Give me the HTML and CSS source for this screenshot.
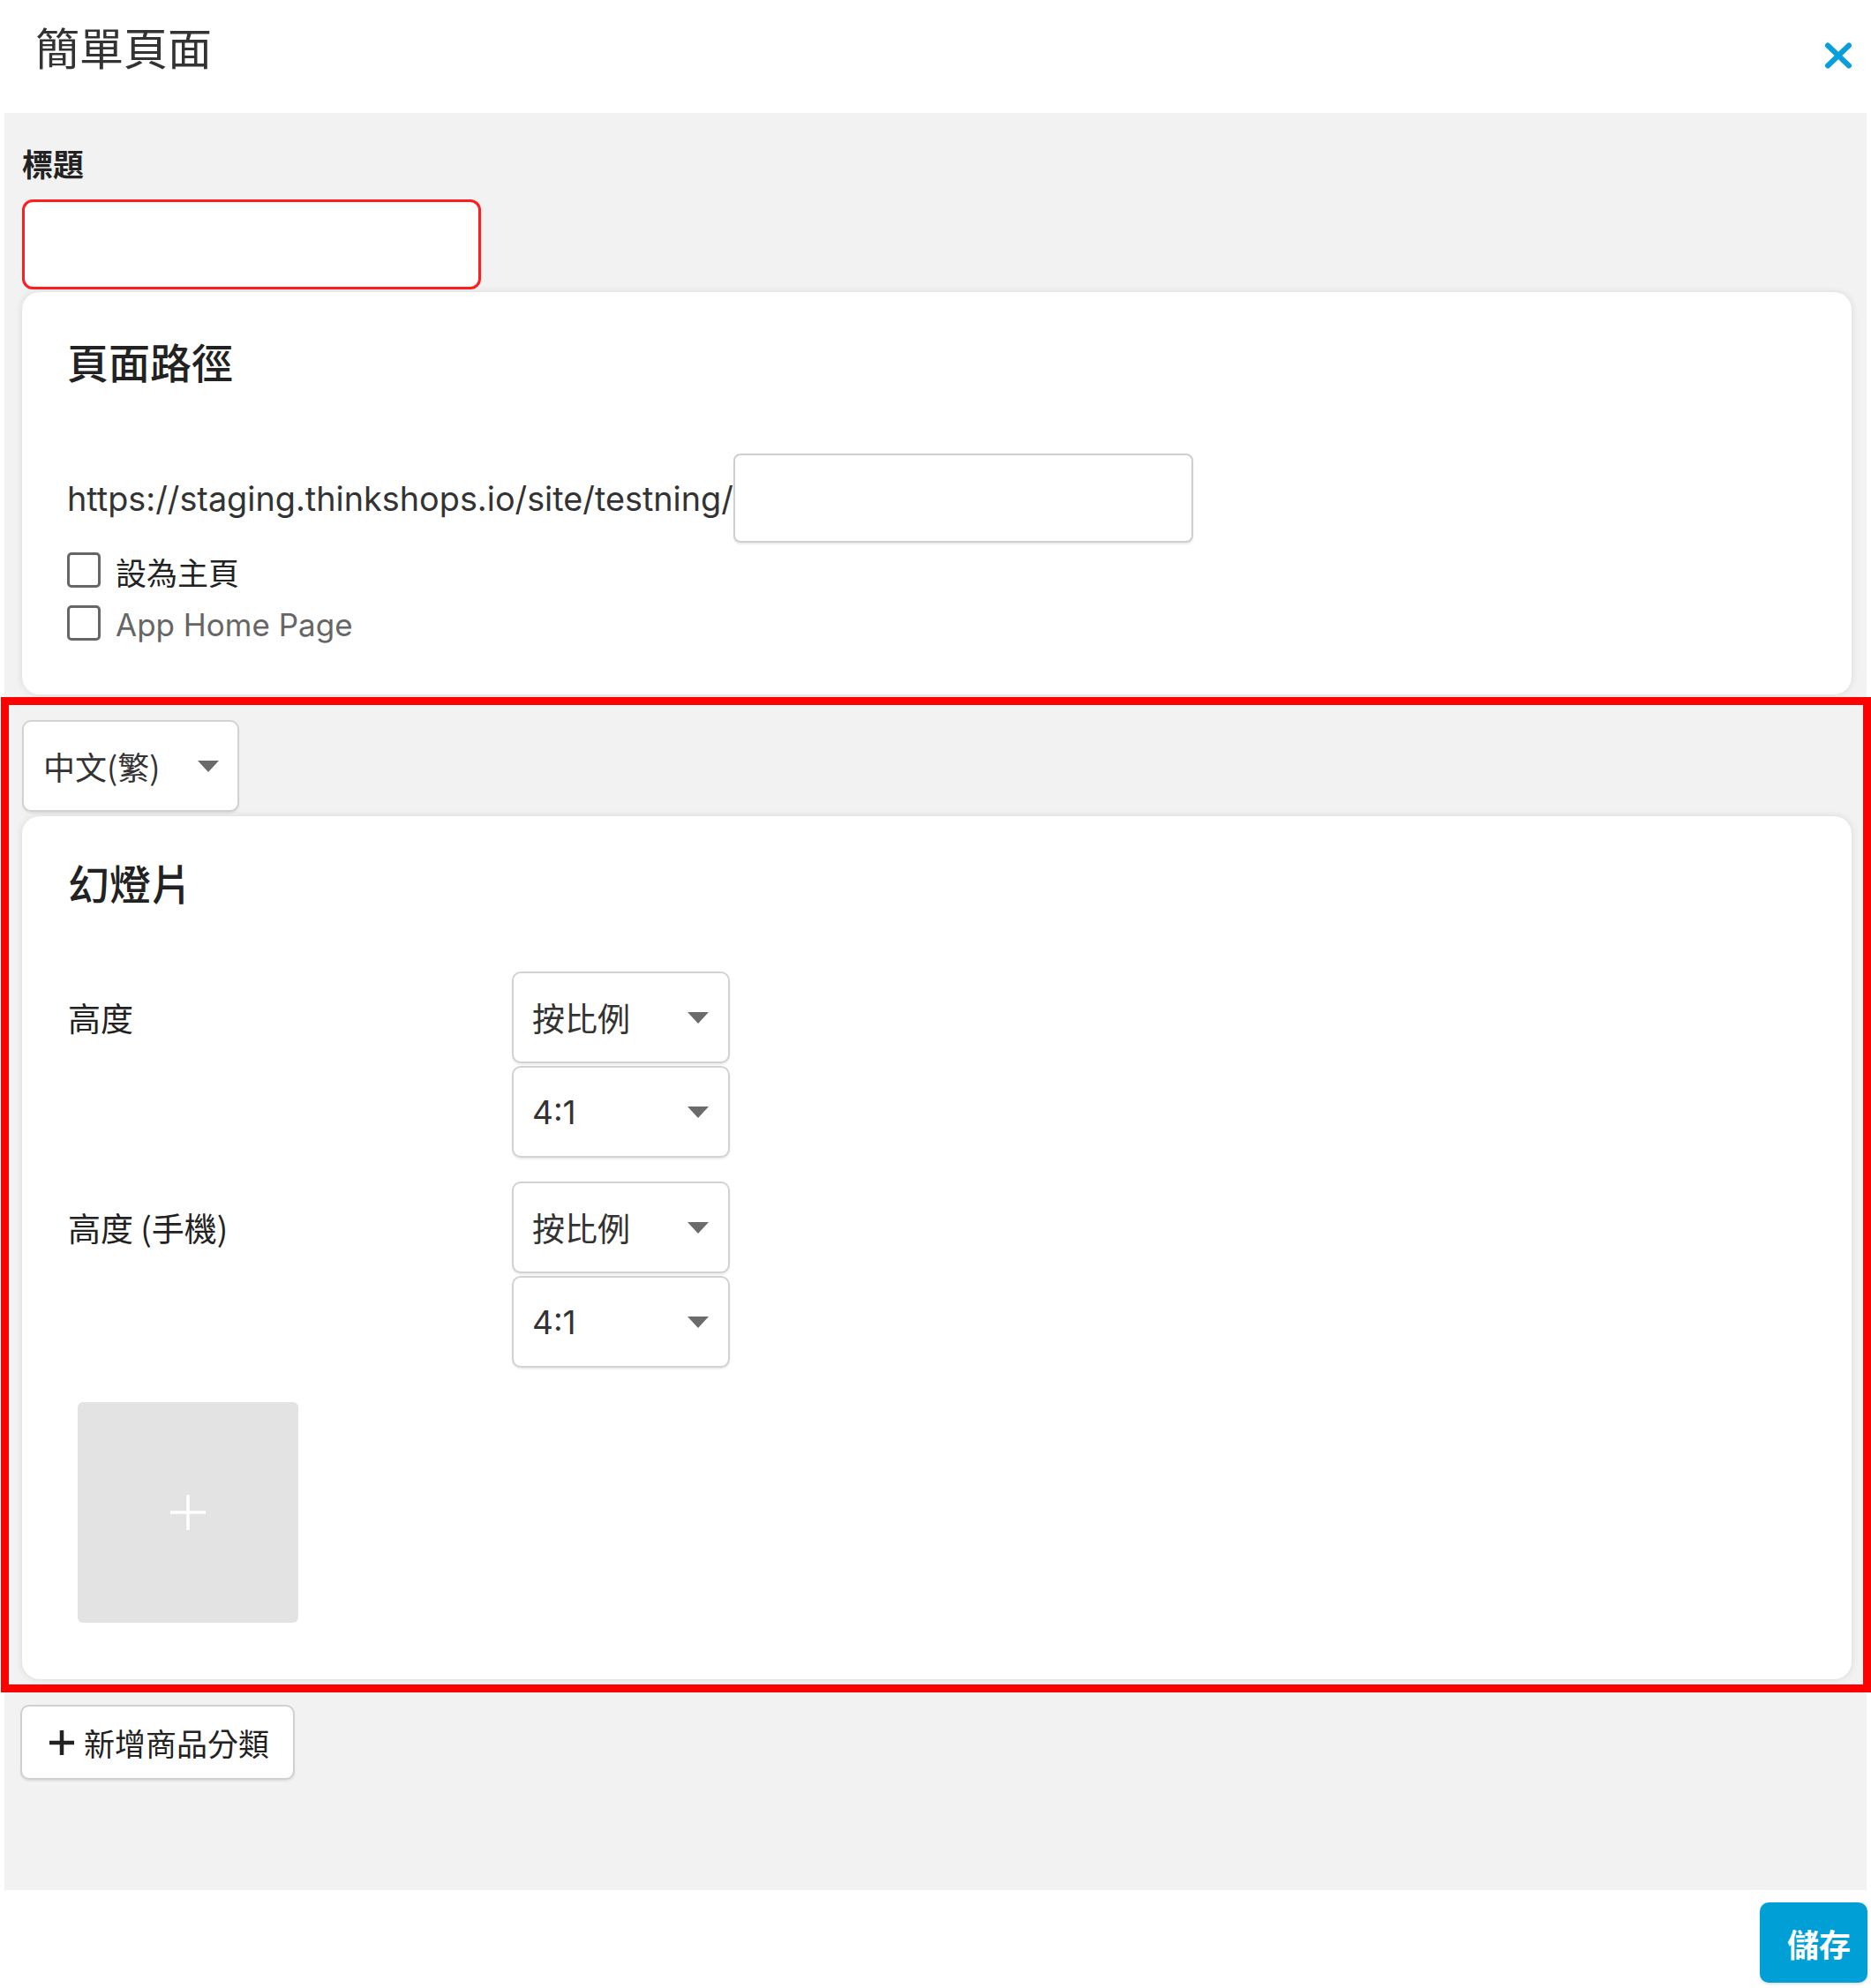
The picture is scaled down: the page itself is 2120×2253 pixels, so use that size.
FILE: index.html
```html
<!DOCTYPE html>
<html lang="zh-Hant">
<head>
<meta charset="utf-8">
<title>簡單頁面</title>
<link rel="stylesheet" href="styles.css">
</head>
<body>
<div class="page">
  <header class="header">
    <h1 class="title">簡單頁面</h1>
    <button class="close" aria-label="關閉">
      <svg width="34" height="32" viewBox="0 0 34 32"><path d="M5 4.5 L29 27.5 M29 4.5 L5 27.5" stroke="#0a9fd8" stroke-width="6" stroke-linecap="round" fill="none"/></svg>
    </button>
  </header>

  <main class="panel">
    <label class="field-label">標題</label>
    <input class="title-input" type="text">

    <section class="card card-path">
      <h2 class="card-title">頁面路徑</h2>
      <div class="url-row">
        <span class="url-text">https://staging.thinkshops.io/site/testning/</span>
        <input class="url-input" type="text">
      </div>
      <label class="check-row"><span class="checkbox"></span><span class="check-text">設為主頁</span></label>
      <label class="check-row"><span class="checkbox"></span><span class="check-text latin">App Home Page</span></label>
    </section>

    <div class="select lang"><span class="select-value">中文(繁)</span><i class="caret"></i></div>

    <section class="card card-slide">
      <h2 class="card-title">幻燈片</h2>
      <div class="setting-row first">
        <div class="setting-label">高度</div>
        <div class="select-stack">
          <div class="select"><span class="select-value">按比例</span><i class="caret"></i></div>
          <div class="select"><span class="select-value latin">4:1</span><i class="caret"></i></div>
        </div>
      </div>
      <div class="setting-row">
        <div class="setting-label">高度 (手機)</div>
        <div class="select-stack">
          <div class="select"><span class="select-value">按比例</span><i class="caret"></i></div>
          <div class="select"><span class="select-value latin">4:1</span><i class="caret"></i></div>
        </div>
      </div>
      <div class="upload-box">
        <svg width="40" height="40" viewBox="0 0 40 40"><path d="M20 0 V40 M0 20 H40" stroke="#fff" stroke-width="3.5" fill="none"/></svg>
      </div>
    </section>

    <button class="add-btn">
      <svg width="30" height="30" viewBox="0 0 30 30"><path d="M15 1 V29 M1 15 H29" stroke="#222" stroke-width="4.5" fill="none"/></svg>
      <span>新增商品分類</span>
    </button>
  </main>

  <footer class="footer">
    <button class="save">儲存</button>
  </footer>

  <div class="annotation"></div>
</div>
</body>
</html>
```

FILE: styles.css
```css
* { box-sizing: border-box; }

html, body {
  margin: 0;
  padding: 0;
  background: #fff;
}

body {
  font-family: "Noto Sans CJK TC", "Noto Sans CJK SC", sans-serif;
  color: #222;
}

button, input {
  font-family: inherit;
}

.page {
  position: relative;
  width: 2120px;
  height: 2253px;
  overflow: hidden;
}

/* header */
.header {
  height: 128px;
  display: flex;
  justify-content: space-between;
  align-items: flex-start;
  padding: 27px 20px 0 40px;
}

.title {
  margin: 0;
  font-size: 50px;
  line-height: 50px;
  font-weight: 400;
  color: #333;
}

.close {
  margin-top: 20px;
  width: 34px;
  height: 32px;
  padding: 0;
  border: 0;
  background: none;
  display: block;
}

.close svg { display: block; }

/* gray panel */
.panel {
  margin: 0 5px;
  background: #f2f2f2;
  padding: 40px 17px 125px 20px;
  height: 2014px;
}

.field-label {
  display: block;
  font-size: 35px;
  line-height: 34px;
  font-weight: 700;
  color: #222;
}

.title-input {
  display: block;
  margin: 24px 0 0 0;
  width: 520px;
  height: 102px;
  border: 3px solid #ff1e1e;
  border-radius: 12px;
  background: #fff;
  outline: none;
}

.card {
  background: #fff;
  border-radius: 20px;
  box-shadow: 0 0 9px rgba(0, 0, 0, 0.11);
}

.card-title {
  margin: 0;
  font-size: 47px;
  line-height: 45px;
  font-weight: 500;
  color: #222;
}

/* page path card */
.card-path {
  margin-top: 3px;
  height: 456px;
  padding: 55px 0 0 51px;
}

.url-row {
  margin-top: 83px;
  display: flex;
  align-items: center;
  gap: 0;
}

.url-text {
  font-family: Inter, sans-serif;
  font-size: 37.8px;
  color: #333;
}

.url-input {
  width: 521px;
  height: 101px;
  border: 2px solid #cfcfcf;
  border-radius: 8px;
  background: #fff;
  box-shadow: 0 2px 2px rgba(0, 0, 0, 0.08);
  outline: none;
}

.check-row {
  display: flex;
  align-items: center;
  gap: 17px;
  height: 40px;
  margin-top: 11px;
}

.check-row + .check-row {
  margin-top: 20px;
}

.checkbox {
  width: 38px;
  height: 40px;
  border: 3px solid #666;
  border-radius: 5px;
  background: #fff;
  flex: none;
}

.check-text {
  font-size: 35px;
  line-height: 40px;
  padding-top: 4px;
  color: #222;
}

.check-text.latin {
  font-family: Inter, sans-serif;
  font-size: 35px;
  color: #666;
}

/* selects */
.select {
  display: flex;
  align-items: center;
  justify-content: space-between;
  background: #fff;
  border: 2px solid #d2d2d2;
  border-radius: 10px;
  box-shadow: 0 2px 2px rgba(0, 0, 0, 0.07);
}

.select-value {
  font-size: 37px;
  color: #333;
}

.select-value.latin {
  font-family: Inter, sans-serif;
  font-size: 37px;
}

.caret {
  width: 0;
  height: 0;
  border-left: 12.5px solid transparent;
  border-right: 12.5px solid transparent;
  border-top: 13px solid #6b6b6b;
}

.lang {
  margin-top: 29px;
  width: 246px;
  height: 104px;
  padding: 0 21px 0 22px;
}

.lang .select-value {
  font-size: 36px;
}

/* slide card */
.card-slide {
  margin-top: 5px;
  padding: 52px 0 64px 52px;
}

.setting-row {
  display: grid;
  grid-template-columns: 503px 247px;
  margin-top: 27px;
}

.setting-row.first {
  margin-top: 79px;
}

.setting-label {
  font-size: 37px;
  line-height: 104px;
  color: #222;
}

.select-stack {
  display: flex;
  flex-direction: column;
  gap: 3px;
}

.select-stack .select {
  height: 104px;
  padding: 0 22px 0 21px;
}

.upload-box {
  margin: 39px 0 0 11px;
  width: 250px;
  height: 250px;
  background: #e3e3e3;
  border-radius: 6px;
  display: flex;
  align-items: center;
  justify-content: center;
}

/* add category button */
.add-btn {
  margin: 29px 0 0 -2px;
  width: 311px;
  height: 85px;
  display: flex;
  align-items: center;
  gap: 10px;
  padding: 0 0 0 30px;
  background: #fff;
  border: 2px solid #d0d0d0;
  border-radius: 10px;
  box-shadow: 0 2px 2px rgba(0, 0, 0, 0.07);
  font-size: 35px;
  color: #222;
}

.add-btn svg { flex: none; }

/* footer */
.footer {
  height: 111px;
  display: flex;
  justify-content: flex-end;
  padding: 14px 4px 0 0;
}

.save {
  width: 122px;
  height: 91px;
  border: 0;
  border-radius: 10px;
  background: #00a0d7;
  color: #fff;
  font-size: 36px;
  font-weight: 700;
  padding: 0 0 0 12px;
  box-shadow: 0 2px 3px rgba(0, 0, 0, 0.12);
}

/* red annotation frame drawn over the screenshot */
.annotation {
  position: absolute;
  left: 1px;
  top: 790px;
  width: 2119px;
  height: 1128px;
  border: 9px solid #ff0000;
  pointer-events: none;
}
```
